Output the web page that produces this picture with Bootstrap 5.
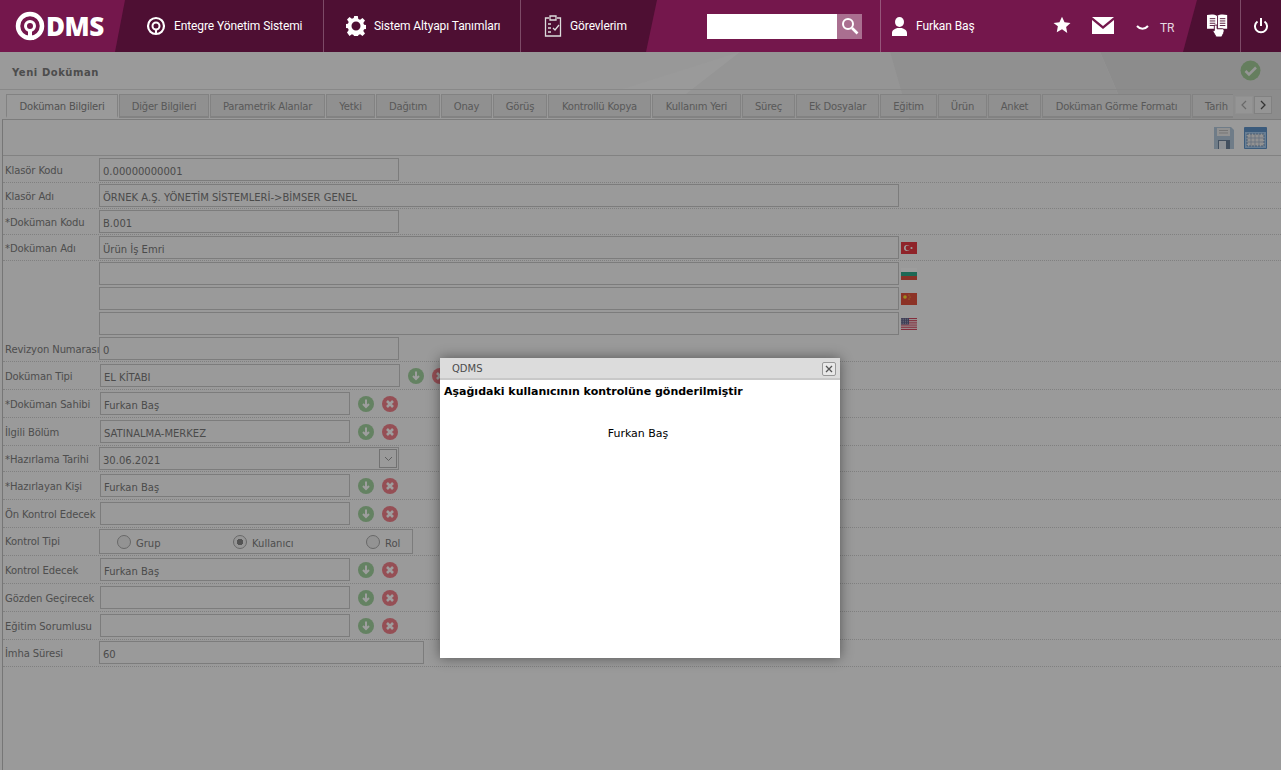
<!DOCTYPE html>
<html lang="tr"><head><meta charset="utf-8"><title>QDMS</title>
<link href="https://cdn.jsdelivr.net/npm/bootstrap@5.3.0/dist/css/bootstrap.min.css" rel="stylesheet">
<style>
html,body{height:100%;overflow:hidden}
body{font-family:"DejaVu Sans",sans-serif;font-size:10px;color:#7e7e7e;background:#f4f4f4}
.q-top{height:52px;background:#74174c;color:#fff;font-family:Roboto,sans-serif;font-size:12px;letter-spacing:-.1px}
.q-logo{width:115px;padding-left:15px;font:800 26px/52px "Open Sans",sans-serif;letter-spacing:-.5px;gap:1px}
.q-dark{width:542px;height:52px;background:#4e0f33;clip-path:polygon(10px 0,100% 0,calc(100% - 11px) 100%,0 100%)}
.q-navi{height:52px;gap:8px}
.q-navi+.q-navi{border-left:1px solid #7d4a67}
.q-n1{width:208px;padding-left:31px}.q-n2{width:197px;padding-left:22px}.q-n3{width:137px;padding-left:23px}
.q-search{margin-left:50px;width:155px}
.q-search input{width:130px;height:25px;border:0;background:#fff;padding:0 4px;display:block}
.q-sbtn{width:25px;height:25px;background:#aa6f90}
.q-user{margin-left:18px;width:169px;height:52px;border-left:1px solid #96557a;padding-left:11px;gap:9px}
.q-star{margin-left:4px;margin-top:-2px}
.q-mail{margin-left:21px;margin-top:-1px}
.q-lang{margin-left:22px;font-size:12px;color:#e6d9e2;gap:11px;padding-top:3px}
.q-rdark{width:98px;margin-left:auto;height:52px;background:#4e0f33;clip-path:polygon(14px 0,100% 0,100% 100%,0 100%)}
.q-book{width:57px;padding-left:24px}
.q-pow{width:41px;border-left:1px solid #7d4a67}
.q-main{height:718px;overflow:hidden;background:#f8f8f8}
.q-poly{position:absolute;left:0;top:0;width:1281px;height:70px}
.q-head{height:38px;padding:4px 12px 0;border-bottom:1px solid #dcdcdc;font-weight:700;color:#7c7c7c;position:relative;font-size:10px;letter-spacing:.55px}
.q-tabs{height:29px;padding:4px 0 0 6px;gap:1px;position:relative}
.q-tab{height:24px;border:1px solid #d2d2d2;border-bottom-width:2px;background:#e8e8e8;color:#909090;line-height:24px;text-align:center;overflow:hidden;white-space:nowrap;flex:none;letter-spacing:-.2px}
.q-tab.q-on{background:#f8f8f8;color:#858585;border-bottom-color:#f8f8f8}
.q-tab.q-cut{text-align:left;padding-left:12px;border-right:0}
.q-arrows{position:absolute;right:9px;top:6px;gap:1px}
.q-arrow{width:18px;height:18px;background:#f0f0f0;border:1px solid #d0d0d0;color:#555}
.q-arrow.q-off{color:#aaa;border-color:#e8e8e8}
.q-panel{margin-left:2px;border-left:1px solid #bfbfbf;border-top:1px solid #c9c9c9;position:relative;height:651px;background:#f8f8f8}
.q-bar{height:36px;border-bottom:1px solid #d2d2d2;padding:7px 14px 0 0;gap:10px}
.q-row{height:26px;padding:1px 0 0 2px;border-bottom:1px dotted #cfcfcf}
.q-r1{height:27px}
.q-p2{padding-top:2px}
.q-tall{height:28px;padding-top:2px}
.q-p1{padding-top:1px}
.q-plain{height:25px;border-bottom:0}
.q-lbl{width:94px;flex:none;line-height:25px;white-space:nowrap;letter-spacing:-.1px}
.q-in{height:23px;border:1px solid #c9c9c9;background:transparent;line-height:23px;padding:1px 3px 0;color:#7a7a7a;flex:none;white-space:nowrap}
.q-w300{width:300px}.q-w800{width:800px}.q-w250{width:250px;margin-left:1px}.q-w300b{width:300px;margin-left:1px}.q-w325{width:325px}
.q-acts{gap:8px;margin-left:8px;margin-top:4px}
.q-flag{width:16px;height:12px;margin:6px 0 0 2px;opacity:.8}
.q-drop{position:absolute;right:1px;top:1px;width:18px;height:19px;border:1px solid #b9b9b9;color:#999}
.q-radio{width:14px;height:14px;border:1px solid #a8a8a8;border-radius:50%;background:#eee;flex:none}
.q-radio.q-sel{background:radial-gradient(circle,#888 0 3px,#f2f2f2 3.5px)}
.q-ctrl{width:314px;height:25px;border:1px solid #c9c9c9;position:relative}
.q-opt{position:absolute;top:5px;gap:5px;line-height:18px}
.q-veil{position:absolute;left:0;right:0;top:52px;bottom:0;background:rgba(0,0,0,.38);z-index:5}
.q-modal{position:absolute;left:440px;top:358px;width:400px;height:300px;background:#fff;z-index:6;box-shadow:0 0 12px rgba(0,0,0,.45);color:#000}
.q-mhead{height:22px;background:#dcdcdc;border-bottom:2px solid #c8c8c8;padding-left:12px;line-height:21px;color:#4c4c4c}
.q-x{position:absolute;right:4px;top:4px;width:14px;height:14px;border:1px solid #999;border-radius:2px;background:#e8e8e8}
.q-mtitle{font-weight:700;padding:4px 4px 0;line-height:15px;font-size:11px}
.q-mname{margin-top:27px;text-align:center;line-height:15px;padding-right:4px;font-size:11px}
</style></head><body>
<div class="q-top d-flex align-items-center position-relative">
 <div class="q-logo d-flex align-items-center"><svg width="30" height="30" viewBox="0 0 30 30" fill="none"><circle cx="15" cy="15" r="12" stroke="#fff" stroke-width="4.500"/><circle cx="15" cy="15" r="4.500" stroke="#fff" stroke-width="3"/><path d="M15 19v8h4" stroke="#fff" stroke-width="4"/></svg><span>DMS</span></div>
 <div class="q-dark d-flex">
  <div class="q-navi q-n1 d-flex align-items-center"><svg width="20" height="20" viewBox="0 0 20 20" fill="none"><circle cx="10" cy="10" r="8" stroke="#fff" stroke-width="2.200"/><circle cx="10" cy="10" r="3.500" stroke="#fff" stroke-width="2"/><path d="M10 13v5" stroke="#fff" stroke-width="2"/></svg><span>Entegre Yönetim Sistemi</span></div>
  <div class="q-navi q-n2 d-flex align-items-center"><svg width="20" height="20" viewBox="0 0 20 20"><path fill="#fff" fill-rule="evenodd" d="M8.200 0h3.600l.5 2.900 1.800.8 2.400-1.700 2.500 2.500-1.700 2.400.8 1.800 2.900.5v3.600l-2.900.5-.8 1.800 1.700 2.400-2.500 2.500-2.400-1.700-1.800.8-.5 2.900H8.200l-.5-2.900-1.800-.8-2.400 1.700L1 16.500l1.700-2.400-.8-1.800L-1 11.800V8.200l2.900-.5.8-1.800L1 3.500 3.500 1l2.400 1.700 1.800-.8zM10 5.500a4.500 4.500 0 1 0 0 9 4.500 4.500 0 0 0 0-9z"/></svg><span>Sistem Altyapı Tanımları</span></div>
  <div class="q-navi q-n3 d-flex align-items-center"><svg width="18" height="22" viewBox="0 0 18 22" fill="none" stroke="#ddd" stroke-width="1.300"><path d="M5 3H1.500v18h15V3H13"/><path d="M6 1h6v4H6z"/><path d="M4 9h3M4 13h3M4 17h3"/><path d="M9 13l2 2 4-5"/></svg><span>Görevlerim</span></div>
 </div>
 <div class="q-search d-flex"><input type="text" aria-label="Ara"><div class="q-sbtn d-flex align-items-center justify-content-center"><svg width="18" height="18" viewBox="0 0 18 18" fill="none" stroke="#fff" stroke-width="2"><circle cx="7" cy="7" r="5"/><path d="M11 11l5.500 5.500" stroke-width="2.600"/></svg></div></div>
 <div class="q-user d-flex align-items-center"><svg width="15" height="19" viewBox="0 0 15 19" fill="#fff"><ellipse cx="7.500" cy="5" rx="4.500" ry="5"/><path d="M0 19v-3c0-3 3-4 5-5h5c2 1 5 2 5 5v3z"/></svg><span>Furkan Baş</span></div>
 <svg class="q-star" width="18" height="18" viewBox="0 0 24 24" fill="#fff"><path d="M12 1l3.400 7.300 7.900 1-5.800 5.400 1.500 7.900L12 17.800l-7 3.800 1.500-7.900L.7 9.300l7.900-1z"/></svg><svg class="q-mail" width="22" height="17" viewBox="0 0 22 17" fill="#fff"><path d="M0 0h22L11 9zM0 3l11 9 11-9v14H0z"/></svg>
 <div class="q-lang d-flex align-items-center"><svg width="13" height="6" viewBox="0 0 13 6" fill="none" stroke="#fff" stroke-width="2"><path d="M1 1c3 3.500 8 3.500 11 0"/></svg><span>TR</span></div>
 <div class="q-rdark d-flex">
  <div class="q-book d-flex align-items-center"><svg width="22" height="26" viewBox="0 0 24 28"><path fill="#fff" d="M0 2c4-1 8-1 11 1 3-2 7-2 11-1v15H0z"/><path stroke="#4e0f33" fill="none" d="M11.500 3v14M3 6h6M3 8.500h6M3 11h6M3 13.500h6M14 6h6M14 8.500h6M14 11h6M14 13.500h6"/><path fill="#fff" stroke="#4e0f33" d="M8 13h3v4h6c2 0 2 3 1 5l-2 4h-6l-4-7 2 0z"/></svg></div>
  <div class="q-pow d-flex align-items-center justify-content-center"><svg width="14" height="16" viewBox="0 0 14 16" fill="none" stroke="#fff" stroke-width="2"><path d="M7 0v8M3.500 3.500a6 6 0 1 0 7 0"/></svg></div>
 </div>
</div>
<div class="q-main position-relative">
 <svg class="q-poly" viewBox="0 0 1281 70" aria-hidden="true"><path fill="#f6f6f6" d="M500 0h240L620 38H500z"/><path fill="#f0f0f0" d="M740 0h150l20 70H650z"/><path fill="#e9e9e9" d="M890 0h210l30 70H910z"/><path fill="#e3e3e3" d="M1100 0h181v70h-151z"/></svg>
 <div class="q-head d-flex align-items-center justify-content-between"><span>Yeni Doküman</span><svg style="margin-right:8px;margin-top:-4px" width="21" height="21" viewBox="0 0 21 21"><circle cx="10.500" cy="10.500" r="10" fill="#a4cc98"/><path d="M5.500 11l3.500 3.500 7-7" fill="none" stroke="#f2f2f2" stroke-width="2.500"/></svg></div>
 <div class="q-tabs d-flex">
  <div class="q-tab q-on" style="width:112px">Doküman Bilgileri</div>
  <div class="q-tab" style="width:90px">Diğer Bilgileri</div>
  <div class="q-tab" style="width:115px">Parametrik Alanlar</div>
  <div class="q-tab" style="width:49px">Yetki</div>
  <div class="q-tab" style="width:64px">Dağıtım</div>
  <div class="q-tab" style="width:51px">Onay</div>
  <div class="q-tab" style="width:54px">Görüş</div>
  <div class="q-tab" style="width:103px">Kontrollü Kopya</div>
  <div class="q-tab" style="width:89px">Kullanım Yeri</div>
  <div class="q-tab" style="width:53px">Süreç</div>
  <div class="q-tab" style="width:83px">Ek Dosyalar</div>
  <div class="q-tab" style="width:57px">Eğitim</div>
  <div class="q-tab" style="width:49px">Ürün</div>
  <div class="q-tab" style="width:53px">Anket</div>
  <div class="q-tab" style="width:149px">Doküman Görme Formatı</div>
  <div class="q-tab q-cut" style="width:41px">Tarih</div>
  <div class="q-arrows d-flex"><div class="q-arrow q-off d-flex align-items-center justify-content-center"><svg width="6" height="10" viewBox="0 0 6 10" fill="none" stroke="currentColor" stroke-width="1.200"><path d="M5 1L1 5l4 4"/></svg></div><div class="q-arrow d-flex align-items-center justify-content-center"><svg width="6" height="10" viewBox="0 0 6 10" fill="none" stroke="currentColor" stroke-width="1.300"><path d="M1 1l4 4-4 4"/></svg></div></div>
 </div>
 <div class="q-panel">
  <div class="q-bar d-flex justify-content-end">
   <svg width="20" height="22" viewBox="0 0 20 22"><path fill="#b4c8dc" d="M0 0h17l3 3v19H0z"/><path fill="#ececec" d="M3 1h13v8H3z"/><path stroke="#bdbdbd" d="M5 3.500h9M5 6h9"/><path fill="#6d8299" d="M4 13h12v9H4z"/><path fill="#e6ebf1" d="M5 14h7v8H5z"/></svg>
   <svg width="23" height="22" viewBox="0 0 23 22"><path fill="#a8cbee" stroke="#5f93c8" d="M.5.500h22v21H.5z"/><path fill="#5f93c8" d="M1 1h21v4H1z"/><path fill="#ececec" stroke="#7793b6" stroke-dasharray="2 1" d="M3 7h17v12H3z"/><path stroke="#9cb0c8" stroke-width=".7" d="M3 11h17M3 15h17M7 7v12M11 7v12M15 7v12"/></svg>
  </div>
  <div class="q-row q-r1 q-p2 d-flex"><div class="q-lbl">Klasör Kodu</div><div class="q-in q-w300">0.00000000001</div></div>
  <div class="q-row d-flex"><div class="q-lbl">Klasör Adı</div><div class="q-in q-w800">ÖRNEK A.Ş. YÖNETİM SİSTEMLERİ-&gt;BİMSER GENEL</div></div>
  <div class="q-row d-flex"><div class="q-lbl">*Doküman Kodu</div><div class="q-in q-w300">B.001</div></div>
  <div class="q-row d-flex"><div class="q-lbl">*Doküman Adı</div><div class="q-in q-w800">Ürün İş Emri</div><svg class="q-flag" viewBox="0 0 16 12"><rect width="16" height="12" fill="#e30a17"/><circle cx="6" cy="6" r="3" fill="#fff"/><circle cx="7" cy="6" r="2.400" fill="#e30a17"/><circle cx="10.500" cy="6" r="1.100" fill="#fff"/></svg></div>
  <div class="q-row q-plain d-flex"><div class="q-lbl"></div><div class="q-in q-w800"></div><svg class="q-flag" viewBox="0 0 16 12"><rect width="16" height="4" fill="#fff"/><rect y="4" width="16" height="4" fill="#00966e"/><rect y="8" width="16" height="4" fill="#d62612"/></svg></div>
  <div class="q-row q-plain d-flex"><div class="q-lbl"></div><div class="q-in q-w800"></div><svg class="q-flag" viewBox="0 0 16 12"><rect width="16" height="12" fill="#de2910"/><circle cx="4" cy="4" r="1.800" fill="#ffde00"/><circle cx="8" cy="2" r=".6" fill="#ffde00"/><circle cx="9" cy="4" r=".6" fill="#ffde00"/><circle cx="8" cy="6" r=".6" fill="#ffde00"/></svg></div>
  <div class="q-row q-plain d-flex"><div class="q-lbl"></div><div class="q-in q-w800"></div><svg class="q-flag" viewBox="0 0 16 12"><rect width="16" height="12" fill="#fff"/><path stroke="#c8102e" stroke-width=".95" d="M0 .5h16M0 2.400h16M0 4.200h16M0 6h16M0 7.900h16M0 9.700h16M0 11.500h16"/><rect width="8" height="6.500" fill="#3c3b6e"/><path stroke="#fff" stroke-width=".7" stroke-dasharray=".8 1" d="M.5 1.200h7M.5 3.200h7M.5 5.200h7"/></svg></div>
  <div class="q-row d-flex"><div class="q-lbl">Revizyon Numarası</div><div class="q-in q-w300">0</div></div>
  <div class="q-row q-tall d-flex"><div class="q-lbl">Doküman Tipi</div><div class="q-in q-w300b">EL KİTABI</div><div class="q-acts d-flex"><svg width="16" height="16" viewBox="0 0 16 16"><circle cx="8" cy="8" r="8" fill="#a2d29e"/><path d="M8 3.500v7M5 8l3 3 3-3" fill="none" stroke="#fff" stroke-width="2"/></svg><svg width="16" height="16" viewBox="0 0 16 16"><circle cx="8" cy="8" r="8" fill="#f0808a"/><path d="M5 5l6 6M11 5l-6 6" stroke="#fff" stroke-width="2.600"/></svg></div></div>
  <div class="q-row q-tall d-flex"><div class="q-lbl">*Doküman Sahibi</div><div class="q-in q-w250">Furkan Baş</div><div class="q-acts d-flex"><svg width="16" height="16" viewBox="0 0 16 16"><circle cx="8" cy="8" r="8" fill="#a2d29e"/><path d="M8 3.500v7M5 8l3 3 3-3" fill="none" stroke="#fff" stroke-width="2"/></svg><svg width="16" height="16" viewBox="0 0 16 16"><circle cx="8" cy="8" r="8" fill="#f0808a"/><path d="M5 5l6 6M11 5l-6 6" stroke="#fff" stroke-width="2.600"/></svg></div></div>
  <div class="q-row q-tall d-flex"><div class="q-lbl">İlgili Bölüm</div><div class="q-in q-w250">SATINALMA-MERKEZ</div><div class="q-acts d-flex"><svg width="16" height="16" viewBox="0 0 16 16"><circle cx="8" cy="8" r="8" fill="#a2d29e"/><path d="M8 3.500v7M5 8l3 3 3-3" fill="none" stroke="#fff" stroke-width="2"/></svg><svg width="16" height="16" viewBox="0 0 16 16"><circle cx="8" cy="8" r="8" fill="#f0808a"/><path d="M5 5l6 6M11 5l-6 6" stroke="#fff" stroke-width="2.600"/></svg></div></div>
  <div class="q-row d-flex"><div class="q-lbl">*Hazırlama Tarihi</div><div class="q-in q-w300 position-relative">30.06.2021<div class="q-drop d-flex align-items-center justify-content-center"><svg width="9" height="6" viewBox="0 0 9 6" fill="none" stroke="currentColor"><path d="M1 1l3.500 3.500L8 1"/></svg></div></div></div>
  <div class="q-row q-tall d-flex"><div class="q-lbl">*Hazırlayan Kişi</div><div class="q-in q-w250">Furkan Baş</div><div class="q-acts d-flex"><svg width="16" height="16" viewBox="0 0 16 16"><circle cx="8" cy="8" r="8" fill="#a2d29e"/><path d="M8 3.500v7M5 8l3 3 3-3" fill="none" stroke="#fff" stroke-width="2"/></svg><svg width="16" height="16" viewBox="0 0 16 16"><circle cx="8" cy="8" r="8" fill="#f0808a"/><path d="M5 5l6 6M11 5l-6 6" stroke="#fff" stroke-width="2.600"/></svg></div></div>
  <div class="q-row q-tall d-flex"><div class="q-lbl">Ön Kontrol Edecek</div><div class="q-in q-w250"></div><div class="q-acts d-flex"><svg width="16" height="16" viewBox="0 0 16 16"><circle cx="8" cy="8" r="8" fill="#a2d29e"/><path d="M8 3.500v7M5 8l3 3 3-3" fill="none" stroke="#fff" stroke-width="2"/></svg><svg width="16" height="16" viewBox="0 0 16 16"><circle cx="8" cy="8" r="8" fill="#f0808a"/><path d="M5 5l6 6M11 5l-6 6" stroke="#fff" stroke-width="2.600"/></svg></div></div>
  <div class="q-row q-tall q-p1 d-flex"><div class="q-lbl">Kontrol Tipi</div><div class="q-ctrl"><div class="q-opt d-flex" style="left:17px"><span class="q-radio"></span>Grup</div><div class="q-opt d-flex" style="left:133px"><span class="q-radio q-sel"></span>Kullanıcı</div><div class="q-opt d-flex" style="left:266px"><span class="q-radio"></span>Rol</div></div></div>
  <div class="q-row q-tall d-flex"><div class="q-lbl">Kontrol Edecek</div><div class="q-in q-w250">Furkan Baş</div><div class="q-acts d-flex"><svg width="16" height="16" viewBox="0 0 16 16"><circle cx="8" cy="8" r="8" fill="#a2d29e"/><path d="M8 3.500v7M5 8l3 3 3-3" fill="none" stroke="#fff" stroke-width="2"/></svg><svg width="16" height="16" viewBox="0 0 16 16"><circle cx="8" cy="8" r="8" fill="#f0808a"/><path d="M5 5l6 6M11 5l-6 6" stroke="#fff" stroke-width="2.600"/></svg></div></div>
  <div class="q-row q-tall d-flex"><div class="q-lbl">Gözden Geçirecek</div><div class="q-in q-w250"></div><div class="q-acts d-flex"><svg width="16" height="16" viewBox="0 0 16 16"><circle cx="8" cy="8" r="8" fill="#a2d29e"/><path d="M8 3.500v7M5 8l3 3 3-3" fill="none" stroke="#fff" stroke-width="2"/></svg><svg width="16" height="16" viewBox="0 0 16 16"><circle cx="8" cy="8" r="8" fill="#f0808a"/><path d="M5 5l6 6M11 5l-6 6" stroke="#fff" stroke-width="2.600"/></svg></div></div>
  <div class="q-row q-tall d-flex"><div class="q-lbl">Eğitim Sorumlusu</div><div class="q-in q-w250"></div><div class="q-acts d-flex"><svg width="16" height="16" viewBox="0 0 16 16"><circle cx="8" cy="8" r="8" fill="#a2d29e"/><path d="M8 3.500v7M5 8l3 3 3-3" fill="none" stroke="#fff" stroke-width="2"/></svg><svg width="16" height="16" viewBox="0 0 16 16"><circle cx="8" cy="8" r="8" fill="#f0808a"/><path d="M5 5l6 6M11 5l-6 6" stroke="#fff" stroke-width="2.600"/></svg></div></div>
  <div class="q-row q-r1 d-flex"><div class="q-lbl">İmha Süresi</div><div class="q-in q-w325">60</div></div>
 </div>
</div>
<div class="q-veil"></div>
<div class="q-modal">
 <div class="q-mhead">QDMS<div class="q-x d-flex align-items-center justify-content-center"><svg width="8" height="8" viewBox="0 0 8 8" stroke="#555" stroke-width="1.300"><path d="M1 1l6 6M7 1L1 7"/></svg></div></div>
 <div class="q-mtitle">Aşağıdaki kullanıcının kontrolüne gönderilmiştir</div>
 <div class="q-mname">Furkan Baş</div>
</div>
</body></html>
